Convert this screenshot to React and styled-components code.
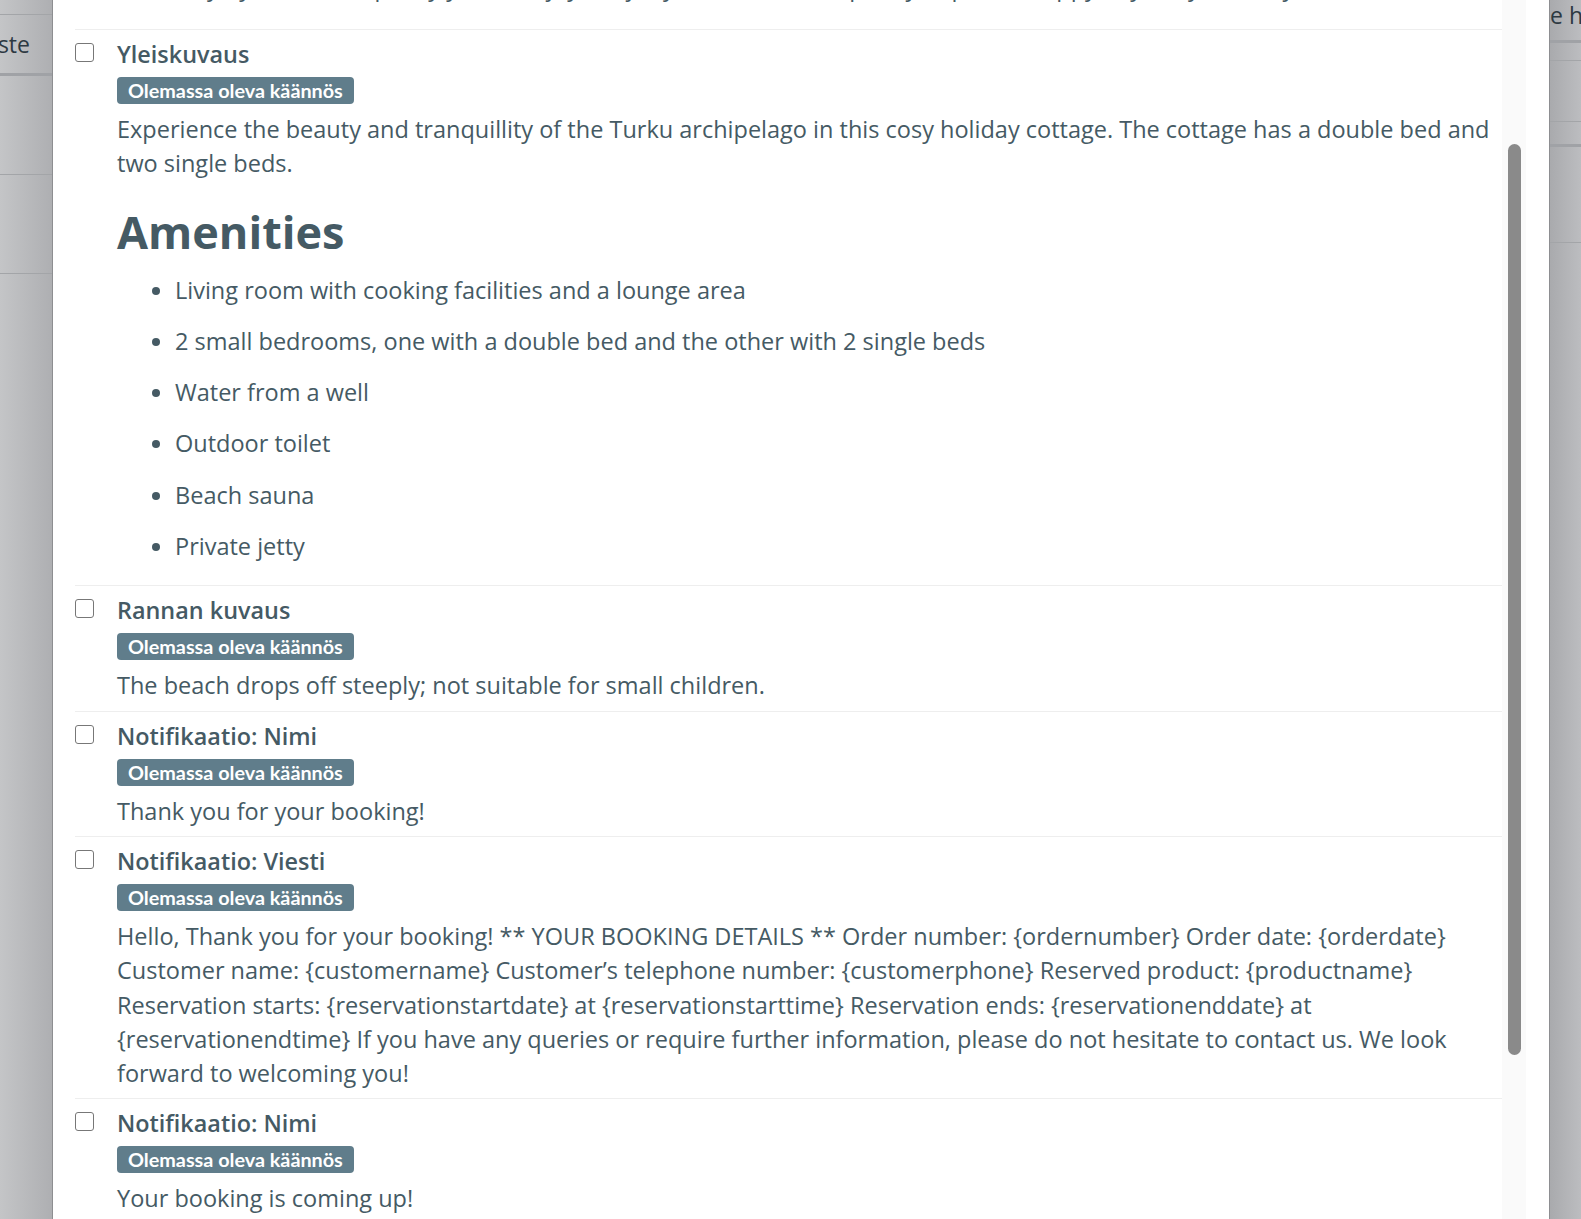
import React from 'react'
import styled, { createGlobalStyle } from 'styled-components'

const GlobalStyle = createGlobalStyle`
    html, body {
        margin: 0;
        padding: 0;
        height: 100%;
        overflow: hidden;
    }
    body {
        font-family: 'Open Sans', 'Noto Sans', sans-serif;
        color: #455a64;
    }
`

const Screen = styled.div`
    display: flex;
    flex-direction: row;
    height: 100vh;
    overflow: hidden;
`

// strips of the page left visible around the dialog, dimmed by the overlay
const Backdrop = styled.div`
    flex: 0 0 ${props => props.width}px;
    display: flex;
    flex-direction: column;
    overflow: hidden;
    background: ${props => props.side === 'left'
        ? 'linear-gradient(to right, #c4c5c7, #aeafb2)'
        : 'linear-gradient(to right, #a9aaad, #bcbdc0)'};
    border-${props => (props.side === 'left' ? 'right' : 'left')}: 1px solid #8d8e91;
`

const BgRow = styled.div`
    flex: 0 0 ${props => props.height}px;
    display: flex;
    align-items: ${props => (props.top ? 'flex-start' : 'center')};
    justify-content: ${props => (props.align === 'right' ? 'flex-end' : 'flex-start')};
    border-bottom: ${props => props.thick ? '3px solid #a0a2a6' : '1px solid #a3a5a8'};
    font-family: 'Open Sans', sans-serif;
    font-size: 23px;
    line-height: 30px;
    color: #2d3942;
    white-space: nowrap;
    padding-right: ${props => (props.align === 'right' ? '22px' : '0')};
`

const Panel = styled.div`
    flex: 1;
    display: flex;
    flex-direction: row;
    background: #ffffff;
    min-width: 0;
`

const Body = styled.div`
    flex: 1;
    min-width: 0;
    padding: 0 0 0 22px;
    display: flex;
    flex-direction: column;
`

const ScrollTrack = styled.div`
    flex: 0 0 24px;
    background: #fafafa;
    display: flex;
    justify-content: center;
    margin-right: 23px;
`

const ScrollThumb = styled.div`
    width: 13px;
    height: 911px;
    margin-top: 144px;
    border-radius: 7px;
    background: #8a8a8a;
`

const Tail = styled.p`
    margin: -30px 0 0 42px;
    padding-bottom: 25px;
    font-size: 23.5px;
    line-height: 34px;
    white-space: nowrap;
`

const Item = styled.div`
    display: grid;
    grid-template-columns: 18px 1fr;
    column-gap: 23px;
    padding: 7px 0 8px 0;
    border-top: 1px solid #eeeeee;
`

const Check = styled.input.attrs({ type: 'checkbox' })`
    appearance: none;
    width: 19px;
    height: 19px;
    margin: 6px 0 0 0;
    border: 1.5px solid #777777;
    border-radius: 3px;
    background: #ffffff;
    box-sizing: border-box;
`

const ItemBody = styled.div`
    display: flex;
    flex-direction: column;
    align-items: flex-start;
    min-width: 0;
    padding: 0 10px 0 1px;
`

const Title = styled.div`
    font-size: 23.4px;
    font-weight: 600;
    line-height: 34px;
`

const Badge = styled.span`
    margin-top: 6px;
    height: 27px;
    line-height: 27px;
    padding: 0 11px;
    border-radius: 4px;
    background: #607d8b;
    color: #ffffff;
    font-family: 'Lato', 'Open Sans', sans-serif;
    font-size: 19.8px;
    font-weight: 700;
`

const Text = styled.div`
    margin-top: 8px;
    font-size: 23.5px;
    line-height: 34.3px;

    p {
        margin: 0;
    }
    h2 {
        margin: 22px 0 13px;
        font-size: 45px;
        line-height: 57px;
        font-weight: 700;
    }
    ul {
        margin: 0 0 14px;
        padding-left: 58px;
    }
    li + li {
        margin-top: 17px;
    }
`

const amenities = [
    'Living room with cooking facilities and a lounge area',
    '2 small bedrooms, one with a double bed and the other with 2 single beds',
    'Water from a well',
    'Outdoor toilet',
    'Beach sauna',
    'Private jetty',
]

const TranslationItem = ({ title, children }) => (
    <Item>
        <Check />
        <ItemBody>
            <Title>{title}</Title>
            <Badge>Olemassa oleva käännös</Badge>
            <Text>{children}</Text>
        </ItemBody>
    </Item>
)

export default function App() {
    return <>
        <GlobalStyle />
        <Screen>
            <Backdrop side="left" width={52}>
                <BgRow height={14} />
                <BgRow height={58} align="right" thick>Paste</BgRow>
                <BgRow height={98} />
                <BgRow height={98} />
            </Backdrop>

            <Panel>
                <Body>
                    <Tail>Your stay by the sea is quietly yours, enjoy the jetty, the sauna and plenty of peace, happy days to you and yours.</Tail>

                    <TranslationItem title="Yleiskuvaus">
                        <p>Experience the beauty and tranquillity of the Turku archipelago in this cosy holiday cottage. The cottage has a double bed and two single beds.</p>
                        <h2>Amenities</h2>
                        <ul>
                            {amenities.map((a, i) => <li key={i}>{a}</li>)}
                        </ul>
                    </TranslationItem>

                    <TranslationItem title="Rannan kuvaus">
                        The beach drops off steeply; not suitable for small children.
                    </TranslationItem>

                    <TranslationItem title="Notifikaatio: Nimi">
                        Thank you for your booking!
                    </TranslationItem>

                    <TranslationItem title="Notifikaatio: Viesti">
                        Hello, Thank you for your booking! ** YOUR BOOKING DETAILS ** Order number: {'{ordernumber}'} Order date: {'{orderdate}'} Customer name: {'{customername}'} Customer’s telephone number: {'{customerphone}'} Reserved product: {'{productname}'} Reservation starts: {'{reservationstartdate}'} at {'{reservationstarttime}'} Reservation ends: {'{reservationenddate}'} at {'{reservationendtime}'} If you have any queries or require further information, please do not hesitate to contact us. We look forward to welcoming you!
                    </TranslationItem>

                    <TranslationItem title="Notifikaatio: Nimi">
                        Your booking is coming up!
                    </TranslationItem>
                </Body>
                <ScrollTrack>
                    <ScrollThumb />
                </ScrollTrack>
            </Panel>

            <Backdrop side="right" width={31}>
                <BgRow height={40} align="left" top thick>e hallinta</BgRow>
                <BgRow height={17} />
                <BgRow height={60} />
                <BgRow height={22} thick />
                <BgRow height={95} />
            </Backdrop>
        </Screen>
    </>
}
